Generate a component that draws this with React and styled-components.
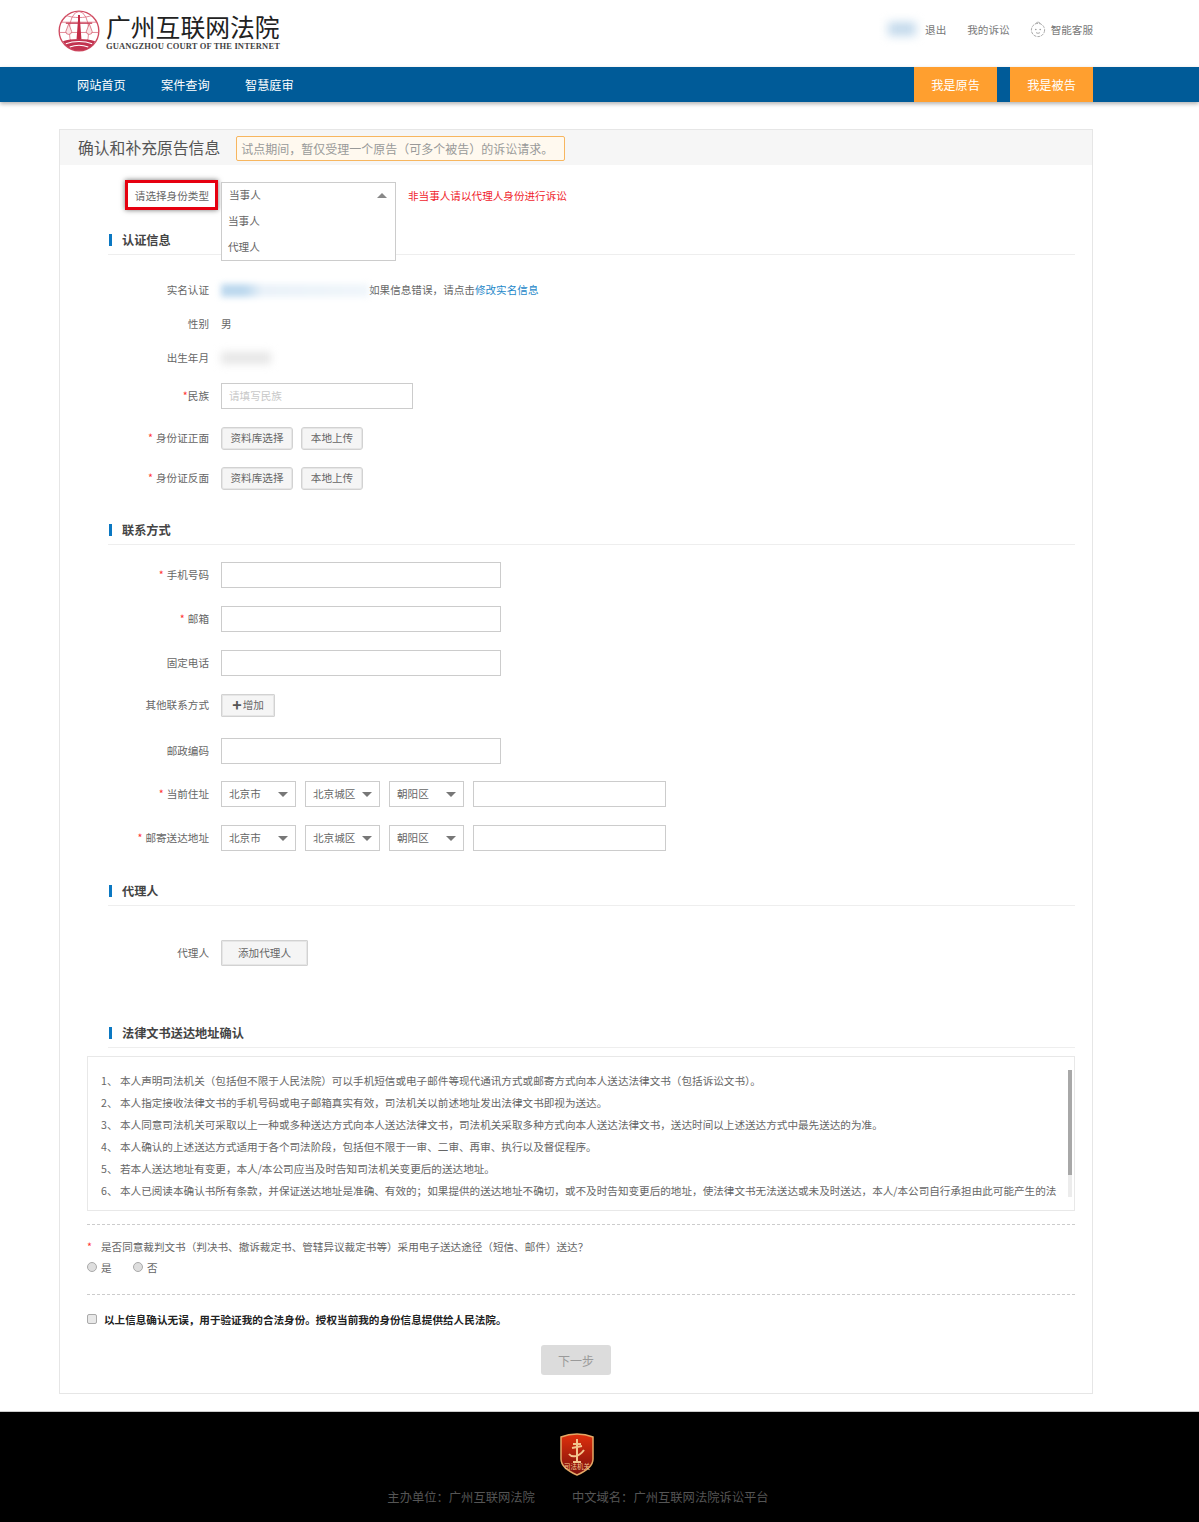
import styled, { createGlobalStyle } from 'styled-components';

const GlobalStyle = createGlobalStyle`
  body {
    margin: 0;
    background: #fff;
    color: #666;
    font-family: "Noto Sans CJK SC", "Liberation Sans", sans-serif;
    font-size: 10.6px;
  }
`;

const Header = styled.header`
  height: 67px;
  display: flex;
  align-items: center;
  justify-content: space-between;
  padding: 0 106px 0 58px;
`;

const Brand = styled.div`
  display: flex;
  align-items: center;
  gap: 6px;
  margin-top: -5px;
`;

const BrandText = styled.div`
  display: flex;
  flex-direction: column;
  width: 175px;
`;

const BrandName = styled.div`
  font-size: 24.8px;
  line-height: 29px;
  color: #222;
  white-space: nowrap;
`;

const BrandSub = styled.div`
  font-family: "Liberation Serif", serif;
  font-weight: 700;
  font-size: 8.5px;
  line-height: 10px;
  color: #444;
  white-space: nowrap;
  letter-spacing: 0.16px;
`;

const UserBar = styled.div`
  display: flex;
  align-items: center;
  margin-top: -9px;
`;

const UserLink = styled.a`
  color: #777;
  margin-left: ${(p) => p.$left || 0}px;
`;

const BlurUser = styled.div`
  width: 28px;
  height: 14px;
  margin-right: 9px;
  background: #c4daec;
  filter: blur(5px);
`;

const Nav = styled.nav`
  height: 35px;
  display: flex;
  align-items: stretch;
  padding: 0 106px 0 77px;
  background: #005b98;
  box-shadow: 0 2px 4px rgba(0, 0, 0, 0.3);
  color: #fff;
  font-size: 12.2px;
`;

const NavLink = styled.a`
  width: 50px;
  margin-right: 34px;
  display: flex;
  align-items: center;
  white-space: nowrap;
`;

const RoleButton = styled.a`
  width: 83px;
  margin-left: ${(p) => p.$left};
  display: flex;
  align-items: center;
  justify-content: center;
  background: #ff9f2f;
`;

const Panel = styled.main`
  width: 1032px;
  margin: 27px 0 0 59px;
  padding-bottom: 18px;
  border: 1px solid #e6e6e6;
`;

const PanelHead = styled.div`
  height: 35px;
  display: flex;
  align-items: center;
  padding-left: 18px;
  background: #f6f6f6;
`;

const PanelTitle = styled.h1`
  margin: 0;
  font-size: 15.8px;
  font-weight: 400;
  color: #555;
`;

const Notice = styled.div`
  width: 329px;
  height: 25px;
  box-sizing: border-box;
  margin: 2px 0 0 16px;
  padding-left: 4px;
  display: flex;
  align-items: center;
  border: 1px solid #f7b65f;
  border-radius: 2px;
  background: #fff9ef;
  color: #999;
  font-size: 12px;
  white-space: nowrap;
`;

const Row = styled.div`
  height: 26px;
  margin-top: ${(p) => p.$top || 0}px;
  display: flex;
  align-items: center;
  position: relative;
`;

const Label = styled.label`
  width: 149px;
  margin-right: 12px;
  padding-bottom: 2px;
  flex: none;
  text-align: right;
`;

const Star = styled.span`
  color: #f33;
  margin-right: ${(p) => p.$gap ?? 3}px;
`;

const HighlightLabel = styled(Label)`
  position: relative;
  padding-bottom: 0;
  &::after {
    content: "";
    position: absolute;
    left: 65px;
    top: -8px;
    width: 87px;
    height: 24px;
    border: 3px solid #e60010;
    box-shadow: 0 0 5px rgba(0, 0, 0, 0.55);
  }
`;

const OpenSelect = styled.div`
  position: absolute;
  left: 161px;
  top: 0;
  z-index: 2;
  width: 173px;
  height: 77px;
  border: 1px solid #ccc;
  background: #fff;
`;

const OpenValue = styled.div`
  height: 23px;
  padding: 0 0 3px 7px;
  display: flex;
  align-items: center;
  position: relative;
  &::after {
    content: "";
    position: absolute;
    right: 8px;
    top: 10px;
    border: 5px solid transparent;
    border-top: 0;
    border-bottom: 5px solid #888;
  }
`;

const OpenOption = styled.div`
  height: 23px;
  padding: 0 0 3px 6px;
  display: flex;
  align-items: center;
`;

const Warning = styled.span`
  margin-left: 187px;
  color: #f01c2c;
`;

const SectionHead = styled.h2`
  height: 27px;
  padding-bottom: 1px;
  width: 967px;
  margin: ${(p) => p.$top}px 0 0 48px;
  display: flex;
  align-items: center;
  border-bottom: 1px solid #eee;
  font-size: 12.2px;
  font-weight: 700;
  color: #444;
  &::before {
    content: "";
    width: 3px;
    height: 12px;
    margin: 0 10px 0 1px;
    background: #0b78c2;
  }
`;

const BlurName = styled.div`
  width: 148px;
  height: 13px;
  background: linear-gradient(90deg, #bcd8ee 0, #bcd8ee 16%, #eaf2f9 28%, #f0f6fb 100%);
  filter: blur(3px);
`;

const BlurDate = styled.div`
  width: 50px;
  height: 12px;
  background: #e6e6e6;
  filter: blur(4px);
`;

const InfoText = styled.span`
  padding-bottom: 2px;
`;

const Link = styled.a`
  color: #1e88c9;
`;

const Input = styled.input`
  width: ${(p) => p.$w}px;
  height: 26px;
  box-sizing: border-box;
  padding: 0 7px 2px;
  border: 1px solid #ccc;
  outline: 0;
  font: inherit;
  &::placeholder {
    color: #c8c8c8;
  }
`;

const Button = styled.button`
  height: 23px;
  width: ${(p) => p.$w}px;
  margin-right: 8px;
  padding: 0 0 1px;
  border: 1px solid #d2d2d2;
  border-radius: 3px;
  background: #f5f5f5;
  color: #666;
  font: inherit;
  box-shadow: inset 0 0 0 1px #e6e6e6;
`;

const AddButton = styled(Button)`
  border-radius: 1px;
  display: flex;
  align-items: center;
  justify-content: center;
`;

const Plus = styled.span`
  font-size: 16px;
  font-weight: 700;
  line-height: 15px;
  margin-right: 1px;
  color: #555;
`;

const AgentButton = styled(Button)`
  height: 26px;
  border-radius: 1px;
`;

const Select = styled.div`
  width: 73px;
  height: 22px;
  margin-right: 9px;
  padding-bottom: 2px;
  display: flex;
  align-items: center;
  border: 1px solid #ccc;
  text-indent: 7px;
  position: relative;
  &::after {
    content: "";
    position: absolute;
    right: 7px;
    top: 10px;
    border: 5px solid transparent;
    border-bottom: 0;
    border-top: 5px solid #777;
  }
`;

const TermsBox = styled.div`
  width: 986px;
  height: 153px;
  margin: 8px 0 0 27px;
  border: 1px solid #e8e8e8;
  position: relative;
`;

const TermsList = styled.ol`
  list-style: none;
  margin: 0;
  padding: 13px 14px 0 13px;
`;

const TermsItem = styled.li`
  display: flex;
  line-height: 22px;
  color: #666;
`;

const TermsNo = styled.span`
  width: 19px;
  flex: none;
`;

const ScrollThumb = styled.div`
  position: absolute;
  right: 2px;
  top: 13px;
  width: 4px;
  height: 105px;
  background: #a8a8a8;
`;

const ScrollTrack = styled.div`
  position: absolute;
  right: 2px;
  top: 118px;
  width: 4px;
  height: 22px;
  background: #ececec;
`;

const Dashed = styled.div`
  width: 988px;
  margin: ${(p) => p.$top}px 0 0 27px;
  border-top: 1px dashed #ccc;
`;

const Question = styled.div`
  margin: 15px 0 0 27px;
  line-height: 14px;
  display: flex;
`;

const RadioRow = styled.div`
  margin: 6px 0 0 27px;
  height: 14px;
  display: flex;
  align-items: center;
`;

const Radio = styled.input.attrs({ type: 'radio' })`
  appearance: none;
  width: 10px;
  height: 10px;
  margin: 0 4px 0 0;
  border: 1px solid #aaa;
  border-radius: 50%;
  background: #dedede;
`;

const RadioText = styled.span`
  width: 32px;
`;

const AgreeRow = styled.div`
  margin: 17px 0 0 27px;
  height: 14px;
  display: flex;
  align-items: center;
  color: #222;
  font-weight: 700;
`;

const Check = styled.input.attrs({ type: 'checkbox' })`
  appearance: none;
  width: 10px;
  height: 10px;
  margin: 0 7px 0 0;
  border: 1px solid #aaa;
  border-radius: 2px;
  background: #e8e8e8;
`;

const NextWrap = styled.div`
  margin-top: 19px;
  padding-left: 481px;
`;

const NextButton = styled.button`
  width: 70px;
  height: 30px;
  padding: 0;
  border: 0;
  border-radius: 3px;
  background: #dcdcdc;
  color: #9a9a9a;
  font: inherit;
  font-size: 12px;
`;

const Footer = styled.footer`
  height: 110px;
  margin-top: 17px;
  border-top: 1px solid #ccc;
  background: #000;
  display: flex;
  flex-direction: column;
  align-items: center;
  color: #555;
  font-size: 12.3px;
`;

const FooterLogo = styled.svg`
  margin-top: 21px;
  margin-left: -46px;
`;

const FooterText = styled.div`
  display: flex;
  gap: 37px;
  margin: 12px 0 0 -43px;
  line-height: 18px;
`;

const LogoMark = () => (
  <svg width="42" height="42" viewBox="0 0 43 43">
    <g fill="none" stroke="#dc6a7c" strokeWidth=".8">
      <circle cx="21.5" cy="21.5" r="20.3" stroke="#cf4a60" strokeWidth="1.400" />
      <ellipse cx="21.5" cy="21.500" rx="10" ry="20" />
      <path d="M3 12.500h37M1.500 23h40M8 5.500c8 3 19 3 27 0" />
    </g>
    <path d="M8 13.500h27" stroke="#c42c48" strokeWidth="1.200" />
    <path d="M20.500 5h2v5l1.500 20h-5l1.500-20z" fill="#c42c48" />
    <path d="M8 22l3-8 3 8a3 3 0 0 1-6 0zM29 22l3-8 3 8a3 3 0 0 1-6 0z" fill="#fbe3e6" stroke="#c8374c" strokeWidth=".6" />
    <path d="M5 32c8-3 25-3 33 0-2 4-5 6.500-8 8-6 2.500-12 2-16 0-4-1.500-7-4.500-9-8z" fill="#c23350" />
    <path d="M8 34.500c8-3 19-3 27 0M12 38c6-2.500 13-2.500 19 0" fill="none" stroke="#fff" strokeWidth="1.100" />
  </svg>
);

const RobotIcon = () => (
  <svg width="16" height="17" viewBox="0 0 16 17" style={{ margin: '0 5px 0 20px' }}>
    <circle cx="8" cy="9" r="6.600" fill="none" stroke="#aaa" strokeWidth="1" strokeDasharray="3 1" />
    <path d="M5.500 3C6.500 1 9 .5 10.500 2.500" fill="none" stroke="#aaa" />
    <circle cx="5.800" cy="8.500" r=".8" fill="#999" />
    <circle cx="10.200" cy="8.500" r=".8" fill="#999" />
    <path d="M6 11.500c1 1 3 1 4 0" fill="none" stroke="#aaa" />
  </svg>
);

const CourtBadge = () => (
  <FooterLogo width="36" height="43" viewBox="0 0 36 43">
    <defs>
      <linearGradient id="badgeFill" x1="0" y1="0" x2="0" y2="1">
        <stop offset="0" stopColor="#e0300c" />
        <stop offset="1" stopColor="#7a0f0c" />
      </linearGradient>
    </defs>
    <path d="M18 1c5 0 11 1 16 3v22c0 8-9 13-16 16C11 39 2 34 2 26V4c5-2 11-3 16-3z" fill="url(#badgeFill)" stroke="#e3a866" strokeWidth="1.500" />
    <path d="M18 6v22M14 11h8M13 15l10-2M10 21c3 4 10 3 15-4" fill="none" stroke="#f3c48c" strokeWidth="2" />
    <path d="M14 29h8" stroke="#f3c48c" strokeWidth="2" />
    <text x="18" y="36" textAnchor="middle" fontSize="6.500" fill="#f3c48c">司法机关</text>
  </FooterLogo>
);

const terms = [
  '本人声明司法机关（包括但不限于人民法院）可以手机短信或电子邮件等现代通讯方式或邮寄方式向本人送达法律文书（包括诉讼文书）。',
  '本人指定接收法律文书的手机号码或电子邮箱真实有效，司法机关以前述地址发出法律文书即视为送达。',
  '本人同意司法机关可采取以上一种或多种送达方式向本人送达法律文书，司法机关采取多种方式向本人送达法律文书，送达时间以上述送达方式中最先送达的为准。',
  '本人确认的上述送达方式适用于各个司法阶段，包括但不限于一审、二审、再审、执行以及督促程序。',
  '若本人送达地址有变更，本人/本公司应当及时告知司法机关变更后的送达地址。',
  '本人已阅读本确认书所有条款，并保证送达地址是准确、有效的；如果提供的送达地址不确切，或不及时告知变更后的地址，使法律文书无法送达或未及时送达，本人/本公司自行承担由此可能产生的法',
];

const AddressRow = ({ label, top }) => (
  <Row $top={top}>
    <Label><Star>*</Star>{label}</Label>
    <Select>北京市</Select>
    <Select>北京城区</Select>
    <Select>朝阳区</Select>
    <Input $w={193} />
  </Row>
);

const UploadRow = ({ label, top }) => (
  <Row $top={top}>
    <Label><Star>*</Star>{label}</Label>
    <Button $w={72}>资料库选择</Button>
    <Button $w={62}>本地上传</Button>
  </Row>
);

export default function App() {
  return (
    <>
      <GlobalStyle />
      <Header>
        <Brand>
          <LogoMark />
          <BrandText>
            <BrandName>广州互联网法院</BrandName>
            <BrandSub>GUANGZHOU COURT OF THE INTERNET</BrandSub>
          </BrandText>
        </Brand>
        <UserBar>
          <BlurUser />
          <UserLink>退出</UserLink>
          <UserLink $left={21}>我的诉讼</UserLink>
          <RobotIcon />
          <UserLink>智能客服</UserLink>
        </UserBar>
      </Header>
      <Nav>
        <NavLink>网站首页</NavLink>
        <NavLink>案件查询</NavLink>
        <NavLink>智慧庭审</NavLink>
        <RoleButton $left="auto">我是原告</RoleButton>
        <RoleButton $left="13px">我是被告</RoleButton>
      </Nav>
      <Panel>
        <PanelHead>
          <PanelTitle>确认和补充原告信息</PanelTitle>
          <Notice>试点期间，暂仅受理一个原告（可多个被告）的诉讼请求。</Notice>
        </PanelHead>

        <Row $top={17}>
          <HighlightLabel>请选择身份类型</HighlightLabel>
          <OpenSelect>
            <OpenValue>当事人</OpenValue>
            <OpenOption>当事人</OpenOption>
            <OpenOption>代理人</OpenOption>
          </OpenSelect>
          <Warning>非当事人请以代理人身份进行诉讼</Warning>
        </Row>

        <SectionHead $top={18}>认证信息</SectionHead>
        <Row $top={22}>
          <Label>实名认证</Label>
          <BlurName />
          <InfoText>如果信息错误，请点击<Link>修改实名信息</Link></InfoText>
        </Row>
        <Row $top={8}>
          <Label>性别</Label>
          <InfoText>男</InfoText>
        </Row>
        <Row $top={8}>
          <Label>出生年月</Label>
          <BlurDate />
        </Row>
        <Row $top={12}>
          <Label><Star $gap={0}>*</Star>民族</Label>
          <Input $w={192} placeholder="请填写民族" />
        </Row>
        <UploadRow label="身份证正面" top={16} />
        <UploadRow label="身份证反面" top={14} />

        <SectionHead $top={25}>联系方式</SectionHead>
        <Row $top={17}>
          <Label><Star>*</Star>手机号码</Label>
          <Input $w={280} />
        </Row>
        <Row $top={18}>
          <Label><Star>*</Star>邮箱</Label>
          <Input $w={280} />
        </Row>
        <Row $top={18}>
          <Label>固定电话</Label>
          <Input $w={280} />
        </Row>
        <Row $top={16}>
          <Label>其他联系方式</Label>
          <AddButton $w={54}><Plus>+</Plus>增加</AddButton>
        </Row>
        <Row $top={20}>
          <Label>邮政编码</Label>
          <Input $w={280} />
        </Row>
        <AddressRow label="当前住址" top={17} />
        <AddressRow label="邮寄送达地址" top={18} />

        <SectionHead $top={26}>代理人</SectionHead>
        <Row $top={34}>
          <Label>代理人</Label>
          <AgentButton $w={87}>添加代理人</AgentButton>
        </Row>

        <SectionHead $top={53}>法律文书送达地址确认</SectionHead>
        <TermsBox>
          <TermsList>
            {terms.map((text, i) => (
              <TermsItem key={i}>
                <TermsNo>{i + 1}、</TermsNo>
                <span>{text}</span>
              </TermsItem>
            ))}
          </TermsList>
          <ScrollThumb />
          <ScrollTrack />
        </TermsBox>

        <Dashed $top={13} />
        <Question>
          <Star $gap={9}>*</Star>
          是否同意裁判文书（判决书、撤诉裁定书、管辖异议裁定书等）采用电子送达途径（短信、邮件）送达？
        </Question>
        <RadioRow>
          <Radio name="agree" />
          <RadioText>是</RadioText>
          <Radio name="agree" />
          <RadioText>否</RadioText>
        </RadioRow>
        <Dashed $top={20} />
        <AgreeRow>
          <Check />
          以上信息确认无误，用于验证我的合法身份。授权当前我的身份信息提供给人民法院。
        </AgreeRow>
        <NextWrap>
          <NextButton>下一步</NextButton>
        </NextWrap>
      </Panel>
      <Footer>
        <CourtBadge />
        <FooterText>
          <span>主办单位：广州互联网法院</span>
          <span>中文域名：广州互联网法院诉讼平台</span>
        </FooterText>
      </Footer>
    </>
  );
}
